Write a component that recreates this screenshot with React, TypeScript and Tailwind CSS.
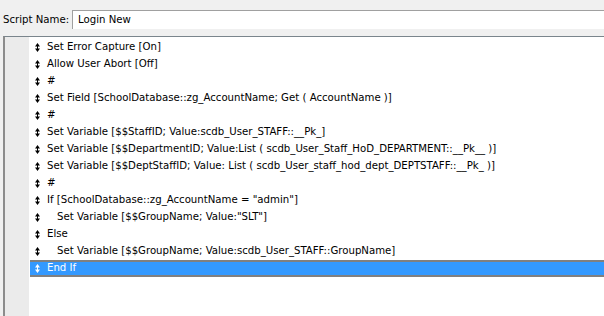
const steps: { text: string; indent?: boolean }[] = [
  { text: "Set Error Capture [On]" },
  { text: "Allow User Abort [Off]" },
  { text: "#" },
  { text: "Set Field [SchoolDatabase::zg_AccountName; Get ( AccountName )]" },
  { text: "#" },
  { text: "Set Variable [$$StaffID; Value:scdb_User_STAFF::__Pk_]" },
  { text: "Set Variable [$$DepartmentID; Value:List ( scdb_User_Staff_HoD_DEPARTMENT::__Pk__ )]" },
  { text: "Set Variable [$$DeptStaffID; Value: List ( scdb_User_staff_hod_dept_DEPTSTAFF::__Pk_ )]" },
  { text: "#" },
  { text: 'If [SchoolDatabase::zg_AccountName = "admin"]' },
  { text: 'Set Variable [$$GroupName; Value:"SLT"]', indent: true },
  { text: "Else" },
  { text: "Set Variable [$$GroupName; Value:scdb_User_STAFF::GroupName]", indent: true },
  { text: "End If" },
];

function MoveHandle({ light }: { light?: boolean }) {
  const c = light ? "#ffffff" : "#000000";
  return (
    <svg width="5" height="9" viewBox="0 0 5 9" className="shrink-0">
      <polygon points="2.5,0 5,3.5 0,3.5" fill={c} />
      <polygon points="0,5.5 5,5.5 2.5,9" fill={c} />
      <rect x="2" y="3" width="1" height="3" fill={c} />
    </svg>
  );
}

export default function App() {
  return (
    <div
      className="w-[604px] h-[316px] overflow-hidden bg-[#f0f0f0] flex flex-col text-[11.3px] text-black"
      style={{ fontFamily: "Tahoma, 'DejaVu Sans Condensed', 'Liberation Sans', sans-serif" }}
    >
      {/* Script name bar */}
      <div className="h-[36px] flex items-start pt-[10px] pl-[3px]">
        <span className="w-[69px] shrink-0 leading-[19px] whitespace-nowrap">Script Name:</span>
        <div className="flex-1 h-[19px] bg-white border-t border-l border-[#a0a0a0] pl-[5px] leading-[18px] whitespace-nowrap">
          Login New
        </div>
      </div>

      {/* Steps panel */}
      <div className="flex-1 flex ml-[3px] border-t border-t-[#7a858c] border-l-2 border-l-[#8c8c8c] bg-white">
        <div className="w-[24px] bg-[#ebebeb] shrink-0" />
        <div className="flex-1 pt-[2px] pl-[1px]">
          {steps.map((s, i) => {
            const sel = i === steps.length - 1;
            return (
              <div
                key={i}
                className={
                  sel
                    ? "h-[17px] flex items-center bg-[#3399ff] text-white border-y-2 border-[#808080] pl-[5px] whitespace-nowrap"
                    : "h-[17px] flex items-center pl-[5px] whitespace-nowrap"
                }
              >
                <MoveHandle light={sel} />
                <span className={s.indent ? "ml-[17px]" : "ml-[7px]"}>{s.text}</span>
              </div>
            );
          })}
        </div>
      </div>
    </div>
  );
}
